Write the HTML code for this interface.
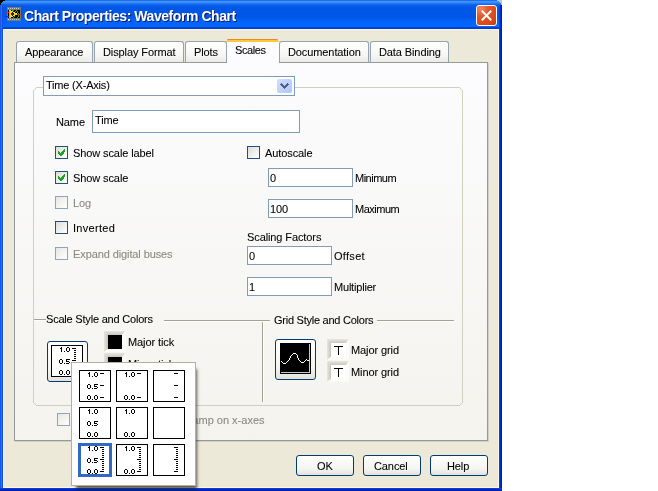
<!DOCTYPE html>
<html><head><meta charset="utf-8">
<style>
*{margin:0;padding:0;box-sizing:border-box}
html,body{width:658px;height:491px;overflow:hidden;background:#fff}
body{position:relative;font-family:"Liberation Sans",sans-serif;font-size:11px;color:#000}
.a{position:absolute}
.t{will-change:transform;position:absolute;white-space:nowrap;font-size:11px;line-height:13px;letter-spacing:-0.1px;-webkit-text-stroke:0.08px currentColor}
#win{left:0;top:0;width:502px;height:491px;background:#ECE9D8}
#title{left:0;top:0;width:502px;height:29px;background:linear-gradient(#0A3FD0 0px,#3D95FF 1px,#3D95FF 2px,#0C5EEA 5px,#0056E5 8px,#0057E7 18px,#0064FC 21px,#0067FF 26.5px,#0046D8 27px,#003CD2 29px)}
#lb{left:0;top:5px;width:3px;height:486px;background:linear-gradient(90deg,#0846E0,#2A6EF2 1px,#2A6EF2 2px,#0D50E8 2px)}
#rb{left:499px;top:5px;width:3px;height:486px;background:linear-gradient(90deg,#0A3CDE 0,#0A3CDE 1px,#002ECA 1px,#002ECA 2px,#001CA8 2px)}
#bb{left:0;top:488px;width:502px;height:3px;background:linear-gradient(#0A3CDE 0,#0A3CDE 1px,#002ECA 1px,#002ECA 2px,#001CA8 2px)}
.tab{position:absolute;top:41px;height:21px;border:1px solid #95A3AC;border-bottom:none;border-radius:3px 3px 0 0;background:linear-gradient(#FFFFFF,#F7F7F5 60%,#ECEBE6)}
.tabt{will-change:transform;position:absolute;top:46px;white-space:nowrap;font-size:11px;line-height:13px;letter-spacing:-0.1px;-webkit-text-stroke:0.08px currentColor}
#panel{left:14px;top:62px;width:474px;height:379px;border:1px solid #919B9C;background:linear-gradient(#FCFCFE,#F4F3EE);box-shadow:1px 1px 0 #D0D0C8}
.tb{position:absolute;border:1px solid #7F9DB9;background:#fff}
.cb{position:absolute;width:13px;height:13px;border:1px solid #1C5180;background:linear-gradient(135deg,#DCDCD7,#FFFFFF)}
.cbd{border-color:#8AA5C4;background:linear-gradient(135deg,#E6E6E0,#FFFFFF)}
.dis{color:#8A887E}
.btn{position:absolute;border:1px solid #003C74;border-radius:3px;background:linear-gradient(#FFFFFF,#F4F4F0 70%,#E3E2DA)}
</style></head><body>
<div id="win" class="a"></div>
<div id="title" class="a"></div>
<svg class="a" style="left:0;top:0" width="502" height="5" shape-rendering="crispEdges"><path fill="#000" d="M0 0h5v1h-5zM0 1h3v1h-3zM0 2h2v1h-2zM0 3h1v2h-1z"/><path fill="#C4C2BA" d="M497 0h5v1h-5zM499 1h3v1h-3zM500 2h2v1h-2zM501 3h1v2h-1z"/></svg>
<div id="lb" class="a"></div>
<div id="rb" class="a"></div>
<div id="bb" class="a"></div>
<div class="a" style="left:3px;top:29px;width:496px;height:1px;background:#FFF8E4"></div>
<div class="a" style="left:3px;top:29px;width:1px;height:459px;background:#FFF8E4"></div>
<div class="a" style="left:498px;top:29px;width:1px;height:459px;background:#FFF8E4"></div>
<div class="a" style="left:3px;top:487px;width:496px;height:1px;background:#FFF8E4"></div>
<!-- icon -->
<svg class="a" style="left:5px;top:7px" width="17" height="14" shape-rendering="crispEdges"><rect x="2" y="0" width="14" height="14" fill="#7A7872"/><rect x="3" y="1" width="1" height="1" fill="#C8C8C4"/><rect x="3" y="12" width="1" height="1" fill="#C8C8C4"/><rect x="5" y="1" width="1" height="1" fill="#C8C8C4"/><rect x="5" y="12" width="1" height="1" fill="#C8C8C4"/><rect x="7" y="1" width="1" height="1" fill="#C8C8C4"/><rect x="7" y="12" width="1" height="1" fill="#C8C8C4"/><rect x="9" y="1" width="1" height="1" fill="#C8C8C4"/><rect x="9" y="12" width="1" height="1" fill="#C8C8C4"/><rect x="11" y="1" width="1" height="1" fill="#C8C8C4"/><rect x="11" y="12" width="1" height="1" fill="#C8C8C4"/><rect x="13" y="1" width="1" height="1" fill="#C8C8C4"/><rect x="13" y="12" width="1" height="1" fill="#C8C8C4"/><rect x="3" y="3" width="12" height="8" fill="#000"/><rect x="7" y="3" width="1" height="1" fill="#18B018"/><rect x="8" y="3" width="1" height="1" fill="#18B018"/><rect x="11" y="3" width="1" height="1" fill="#18B018"/><rect x="10" y="4" width="1" height="1" fill="#18B018"/><rect x="12" y="4" width="1" height="1" fill="#18B018"/><rect x="12" y="5" width="1" height="1" fill="#18B018"/><rect x="13" y="6" width="1" height="1" fill="#18B018"/><rect x="13" y="8" width="1" height="1" fill="#18B018"/><rect x="9" y="9" width="1" height="1" fill="#18B018"/><rect x="13" y="9" width="1" height="1" fill="#18B018"/><rect x="8" y="10" width="1" height="1" fill="#18B018"/><rect x="12" y="10" width="1" height="1" fill="#18B018"/><rect x="4" y="3" width="2" height="1" fill="#F8D81C"/><rect x="4" y="4" width="4" height="1" fill="#F8D81C"/><rect x="4" y="5" width="6" height="1" fill="#F8D81C"/><rect x="4" y="6" width="8" height="1" fill="#F8D81C"/><rect x="4" y="7" width="8" height="1" fill="#F8D81C"/><rect x="4" y="8" width="6" height="1" fill="#F8D81C"/><rect x="4" y="9" width="4" height="1" fill="#F8D81C"/><rect x="4" y="10" width="2" height="1" fill="#F8D81C"/><rect x="4" y="4" width="1" height="6" fill="#E8B000"/><rect x="7" y="5" width="1" height="4" fill="#302800"/><rect x="6" y="6" width="3" height="2" fill="#302800"/><rect x="0" y="5" width="4" height="1" fill="#F01818"/><rect x="0" y="9" width="4" height="1" fill="#1028F0"/><rect x="12" y="7" width="4" height="1" fill="#F01818"/></svg>
<div class="a" style="left:25px;top:9px;will-change:transform;font-weight:bold;font-size:14px;letter-spacing:-0.44px;line-height:16px;color:#0A1E6E;white-space:nowrap">Chart Properties: Waveform Chart</div>
<div class="a" style="left:24px;top:8px;will-change:transform;font-weight:bold;font-size:14px;letter-spacing:-0.44px;line-height:16px;color:#fff;white-space:nowrap">Chart Properties: Waveform Chart</div>
<!-- close btn -->
<div class="a" style="left:476px;top:5px;width:21px;height:21px;border:1px solid #fff;border-radius:3px;background:radial-gradient(circle at 20% 15%,#F08868 0,#E4582A 35%,#D84818 75%,#C03A0E 100%)"></div>
<svg class="a" style="left:476px;top:5px" width="21" height="21" viewBox="0 0 21 21"><path d="M5.8 5.8 L15.2 15.2 M15.2 5.8 L5.8 15.2" stroke="#fff" stroke-width="2"/></svg>

<!-- tabs -->
<div id="panel" class="a"></div>
<div class="tab" style="left:16px;width:77px"></div><div class="tabt" style="left:25px">Appearance</div>
<div class="tab" style="left:94px;width:90px"></div><div class="tabt" style="left:103px">Display Format</div>
<div class="tab" style="left:185px;width:42px"></div><div class="tabt" style="left:194px">Plots</div>
<div class="tab" style="left:279px;width:90px"></div><div class="tabt" style="left:288px">Documentation</div>
<div class="tab" style="left:370px;width:79px"></div><div class="tabt" style="left:379px">Data Binding</div>
<div class="a" style="left:227px;top:41px;width:52px;height:22px;background:#FCFCFE"></div>
<svg class="a" style="left:226px;top:39px" width="53" height="3" shape-rendering="crispEdges"><path fill="#E68B2C" d="M2 0h49v1h-49z"/><path fill="#FFC73C" d="M1 1h51v1h-51zM0 2h53v1h-53z"/><path fill="#F2A84A" d="M1 0h1v1h-1zM51 0h1v1h-1z"/></svg>
<div class="tabt" style="left:235px;top:44px;letter-spacing:-0.4px">Scales</div>

<!-- group box -->
<svg class="a" style="left:0;top:0" width="502" height="491" shape-rendering="crispEdges"><path fill="#D0D0BF" d="M36 87h424v1h-424z M36 405h424v1h-424z M33 90h1v313h-1z M462 90h1v313h-1z M34 89h1v1h-1z M35 88h1v1h-1z M461 89h1v1h-1z M460 88h1v1h-1z M34 403h1v1h-1z M35 404h1v1h-1z M461 403h1v1h-1z M460 404h1v1h-1z"/></svg>
<div class="tb" style="left:43px;top:76px;width:252px;height:20px"></div>
<div class="t" style="left:46px;top:79px;letter-spacing:-0.2px">Time (X-Axis)</div>
<div class="a" style="left:277px;top:79px;width:15px;height:14px;border-radius:2px;background:linear-gradient(135deg,#D2DEFD,#BFD0FA 55%,#AFC6F8)"></div>
<svg class="a" style="left:277px;top:79px" width="15" height="14" shape-rendering="crispEdges"><path d="M4 4h1v1h-1zM10 4h1v1h-1zM3 5h1v1h-1zM4 5h1v1h-1zM5 5h1v1h-1zM9 5h1v1h-1zM10 5h1v1h-1zM11 5h1v1h-1zM4 6h1v1h-1zM5 6h1v1h-1zM6 6h1v1h-1zM8 6h1v1h-1zM9 6h1v1h-1zM10 6h1v1h-1zM5 7h1v1h-1zM6 7h1v1h-1zM7 7h1v1h-1zM8 7h1v1h-1zM9 7h1v1h-1zM6 8h1v1h-1zM7 8h1v1h-1zM8 8h1v1h-1zM7 9h1v1h-1z" fill="#4D6185"/></svg>

<div class="t" style="left:56px;top:116px">Name</div>
<div class="tb" style="left:92px;top:110px;width:208px;height:23px"></div>
<div class="t" style="left:95px;top:114px">Time</div>

<div class="cb" style="left:55px;top:146px"></div>
<div class="t" style="left:73px;top:147px">Show scale label</div>
<div class="cb" style="left:55px;top:171px"></div>
<div class="t" style="left:73px;top:172px">Show scale</div>
<div class="cb cbd" style="left:55px;top:196px"></div>
<div class="t dis" style="left:73px;top:197px">Log</div>
<div class="cb" style="left:55px;top:221px"></div>
<div class="t" style="left:73px;top:222px;letter-spacing:0.3px">Inverted</div>
<div class="cb cbd" style="left:55px;top:247px"></div>
<div class="t dis" style="left:73px;top:248px">Expand digital buses</div>
<svg class="a" style="left:58px;top:149px" width="7" height="7" shape-rendering="crispEdges"><path fill="#21A121" d="M6 0h1v3h-1zM5 1h1v4h-1zM4 2h1v4h-1zM3 3h1v4h-1zM2 4h1v3h-1zM1 3h1v3h-1zM0 2h1v3h-1z"/></svg>
<svg class="a" style="left:58px;top:174px" width="7" height="7" shape-rendering="crispEdges"><path fill="#21A121" d="M6 0h1v3h-1zM5 1h1v4h-1zM4 2h1v4h-1zM3 3h1v4h-1zM2 4h1v3h-1zM1 3h1v3h-1zM0 2h1v3h-1z"/></svg>

<div class="cb" style="left:247px;top:146px"></div>
<div class="t" style="left:265px;top:147px">Autoscale</div>
<div class="tb" style="left:268px;top:168px;width:85px;height:19px"></div>
<div class="t" style="left:270px;top:172px">0</div>
<div class="t" style="left:355px;top:172px;letter-spacing:-0.5px">Minimum</div>
<div class="tb" style="left:268px;top:199px;width:85px;height:19px"></div>
<div class="t" style="left:270px;top:203px">100</div>
<div class="t" style="left:355px;top:203px;letter-spacing:-0.5px">Maximum</div>
<div class="t" style="left:247px;top:231px">Scaling Factors</div>
<div class="tb" style="left:247px;top:246px;width:85px;height:19px"></div>
<div class="t" style="left:249px;top:250px">0</div>
<div class="t" style="left:334px;top:250px;letter-spacing:0.3px">Offset</div>
<div class="tb" style="left:247px;top:277px;width:85px;height:19px"></div>
<div class="t" style="left:249px;top:281px">1</div>
<div class="t" style="left:334px;top:281px;letter-spacing:-0.2px">Multiplier</div>

<!-- scale style -->
<div class="a" style="left:34px;top:319px;width:12px;height:1px;background:#A5A28F;box-shadow:0 1px 0 #fff"></div>
<div class="t" style="left:46px;top:313px;letter-spacing:-0.2px">Scale Style and Colors</div>
<div class="a" style="left:164px;top:320px;width:106px;height:1px;background:#A5A28F;box-shadow:0 1px 0 #fff"></div>
<div class="t" style="left:274px;top:314px;letter-spacing:-0.25px">Grid Style and Colors</div>
<div class="a" style="left:377px;top:320px;width:77px;height:1px;background:#A5A28F;box-shadow:0 1px 0 #fff"></div>
<div class="a" style="left:262px;top:322px;width:1px;height:80px;background:#A5A28F;box-shadow:1px 0 0 #fff"></div>

<div class="btn" style="left:47px;top:341px;width:41px;height:41px"></div>
<svg class="a" style="left:51px;top:345px" width="32" height="32" shape-rendering="crispEdges"><rect x="0.5" y="0.5" width="31" height="31" fill="#fff" stroke="#000"/><path d="M10 2h1v1h-1zM9 3h1v1h-1zM10 3h1v1h-1zM10 4h1v1h-1zM10 5h1v1h-1zM10 6h1v1h-1zM13 6h1v1h-1zM16 2h1v1h-1zM17 2h1v1h-1zM15 3h1v1h-1zM18 3h1v1h-1zM15 4h1v1h-1zM18 4h1v1h-1zM15 5h1v1h-1zM18 5h1v1h-1zM16 6h1v1h-1zM17 6h1v1h-1zM9 14h1v1h-1zM10 14h1v1h-1zM8 15h1v1h-1zM11 15h1v1h-1zM8 16h1v1h-1zM11 16h1v1h-1zM8 17h1v1h-1zM11 17h1v1h-1zM9 18h1v1h-1zM10 18h1v1h-1zM13 18h1v1h-1zM15 14h1v1h-1zM16 14h1v1h-1zM17 14h1v1h-1zM18 14h1v1h-1zM15 15h1v1h-1zM15 16h1v1h-1zM16 16h1v1h-1zM17 16h1v1h-1zM18 17h1v1h-1zM15 18h1v1h-1zM16 18h1v1h-1zM17 18h1v1h-1zM9 25h1v1h-1zM10 25h1v1h-1zM8 26h1v1h-1zM11 26h1v1h-1zM8 27h1v1h-1zM11 27h1v1h-1zM8 28h1v1h-1zM11 28h1v1h-1zM9 29h1v1h-1zM10 29h1v1h-1zM13 29h1v1h-1zM16 25h1v1h-1zM17 25h1v1h-1zM15 26h1v1h-1zM18 26h1v1h-1zM15 27h1v1h-1zM18 27h1v1h-1zM15 28h1v1h-1zM18 28h1v1h-1zM16 29h1v1h-1zM17 29h1v1h-1zM21 3h4v1h-4zM21 15h4v1h-4zM21 27h4v1h-4zM23 5h2v1h-2zM23 7h2v1h-2zM23 9h2v1h-2zM23 11h2v1h-2zM23 13h2v1h-2zM23 17h2v1h-2zM23 19h2v1h-2zM23 21h2v1h-2zM23 23h2v1h-2zM23 25h2v1h-2z"/></svg>

<svg class="a" style="left:104px;top:331px" width="22" height="21"><defs><linearGradient id="bv331t" x1="0" y1="0" x2="0" y2="1"><stop offset="0" stop-color="#E8E6DE"/><stop offset="1" stop-color="#C9C7BD"/></linearGradient><linearGradient id="bv331l" x1="0" y1="0" x2="1" y2="0"><stop offset="0" stop-color="#E8E6DE"/><stop offset="1" stop-color="#C6C4BA"/></linearGradient></defs><polygon points="0,0 22,0 18,4 4,4" fill="url(#bv331t)"/><polygon points="0,0 4,4 4,18 0,21" fill="url(#bv331l)"/><polygon points="22,0 22,21 18,18 18,4" fill="#FBFBF7"/><polygon points="0,21 22,21 18,18 4,18" fill="#FBFBF7"/><rect x="4" y="4" width="14" height="14" fill="#000"/></svg>
<div class="t" style="left:128px;top:336px">Major tick</div>
<svg class="a" style="left:104px;top:353px" width="22" height="21"><defs><linearGradient id="bv353t" x1="0" y1="0" x2="0" y2="1"><stop offset="0" stop-color="#E8E6DE"/><stop offset="1" stop-color="#C9C7BD"/></linearGradient><linearGradient id="bv353l" x1="0" y1="0" x2="1" y2="0"><stop offset="0" stop-color="#E8E6DE"/><stop offset="1" stop-color="#C6C4BA"/></linearGradient></defs><polygon points="0,0 22,0 18,4 4,4" fill="url(#bv353t)"/><polygon points="0,0 4,4 4,18 0,21" fill="url(#bv353l)"/><polygon points="22,0 22,21 18,18 18,4" fill="#FBFBF7"/><polygon points="0,21 22,21 18,18 4,18" fill="#FBFBF7"/><rect x="4" y="4" width="14" height="14" fill="#000"/></svg>
<div class="t" style="left:128px;top:358px">Minor tick</div>

<div class="btn" style="left:275px;top:339px;width:41px;height:41px"></div>
<svg class="a" style="left:280px;top:343px" width="31" height="31" shape-rendering="crispEdges">
<rect width="31" height="31" fill="#000"/><rect x="29" y="1" width="1" height="29" fill="#C8C8C8"/><rect x="1" y="29" width="29" height="1" fill="#C8C8C8"/>
<path d="M1 18h1v1h-1zM2 19h1v1h-1zM3 20h1v1h-1zM4 20h1v1h-1zM5 20h1v1h-1zM6 19h1v1h-1zM7 18h1v1h-1zM8 17h1v1h-1zM9 16h1v1h-1zM9 15h1v1h-1zM10 14h1v1h-1zM10 13h1v1h-1zM11 12h1v1h-1zM12 11h1v1h-1zM13 10h1v1h-1zM14 10h1v1h-1zM15 10h1v1h-1zM16 11h1v1h-1zM17 12h1v1h-1zM17 13h1v1h-1zM17 14h1v1h-1zM18 15h1v1h-1zM18 16h1v1h-1zM19 17h1v1h-1zM20 18h1v1h-1zM21 19h1v1h-1zM22 19h1v1h-1zM23 19h1v1h-1zM24 18h1v1h-1zM25 17h1v1h-1zM26 16h1v1h-1zM27 17h1v1h-1zM28 17h1v1h-1z" fill="#fff"/>
</svg>
<svg class="a" style="left:327px;top:339px" width="22" height="21"><defs><linearGradient id="bv339t" x1="0" y1="0" x2="0" y2="1"><stop offset="0" stop-color="#E8E6DE"/><stop offset="1" stop-color="#C9C7BD"/></linearGradient><linearGradient id="bv339l" x1="0" y1="0" x2="1" y2="0"><stop offset="0" stop-color="#E8E6DE"/><stop offset="1" stop-color="#C6C4BA"/></linearGradient></defs><polygon points="0,0 22,0 19,4 4,4" fill="url(#bv339t)"/><polygon points="0,0 4,4 4,18 0,21" fill="url(#bv339l)"/><polygon points="22,0 22,21 19,18 19,4" fill="#FBFBF7"/><polygon points="0,21 22,21 19,18 4,18" fill="#FBFBF7"/><rect x="4" y="4" width="15" height="14" fill="#fff"/></svg>
<svg class="a" style="left:334px;top:346px" width="9" height="9" shape-rendering="crispEdges"><rect width="9" height="1"/><rect x="4" width="1" height="9"/></svg>
<div class="t" style="left:351px;top:344px">Major grid</div>
<svg class="a" style="left:327px;top:361px" width="22" height="21"><defs><linearGradient id="bv361t" x1="0" y1="0" x2="0" y2="1"><stop offset="0" stop-color="#E8E6DE"/><stop offset="1" stop-color="#C9C7BD"/></linearGradient><linearGradient id="bv361l" x1="0" y1="0" x2="1" y2="0"><stop offset="0" stop-color="#E8E6DE"/><stop offset="1" stop-color="#C6C4BA"/></linearGradient></defs><polygon points="0,0 22,0 19,4 4,4" fill="url(#bv361t)"/><polygon points="0,0 4,4 4,18 0,21" fill="url(#bv361l)"/><polygon points="22,0 22,21 19,18 19,4" fill="#FBFBF7"/><polygon points="0,21 22,21 19,18 4,18" fill="#FBFBF7"/><rect x="4" y="4" width="15" height="14" fill="#fff"/></svg>
<svg class="a" style="left:334px;top:368px" width="9" height="9" shape-rendering="crispEdges"><rect width="9" height="1"/><rect x="4" width="1" height="9"/></svg>
<div class="t" style="left:351px;top:366px">Minor grid</div>

<div class="cb cbd" style="left:57px;top:413px"></div>
<div class="t dis" style="left:75px;top:414px;letter-spacing:0">Ignore waveform time stamp on x-axes</div>

<!-- buttons -->
<div class="btn" style="left:296px;top:455px;width:58px;height:21px"></div>
<div class="t" style="left:317px;top:460px">OK</div>
<div class="btn" style="left:363px;top:455px;width:58px;height:21px"></div>
<div class="t" style="left:374px;top:460px">Cancel</div>
<div class="btn" style="left:430px;top:455px;width:58px;height:21px"></div>
<div class="t" style="left:447px;top:460px">Help</div>

<!-- popup -->
<div class="a" style="left:71px;top:362px;width:125px;height:124px;background:#fff;border:1px solid #B4B09C;box-shadow:3px 5px 3px -2px rgba(30,28,20,0.7)"></div>
<svg class="a" style="left:79px;top:370px" width="32" height="32" shape-rendering="crispEdges"><rect x="0.5" y="0.5" width="31" height="31" fill="#fff" stroke="#000"/><path d="M10 2h1v1h-1zM9 3h1v1h-1zM10 3h1v1h-1zM10 4h1v1h-1zM10 5h1v1h-1zM10 6h1v1h-1zM13 6h1v1h-1zM16 2h1v1h-1zM17 2h1v1h-1zM15 3h1v1h-1zM18 3h1v1h-1zM15 4h1v1h-1zM18 4h1v1h-1zM15 5h1v1h-1zM18 5h1v1h-1zM16 6h1v1h-1zM17 6h1v1h-1zM9 14h1v1h-1zM10 14h1v1h-1zM8 15h1v1h-1zM11 15h1v1h-1zM8 16h1v1h-1zM11 16h1v1h-1zM8 17h1v1h-1zM11 17h1v1h-1zM9 18h1v1h-1zM10 18h1v1h-1zM13 18h1v1h-1zM15 14h1v1h-1zM16 14h1v1h-1zM17 14h1v1h-1zM18 14h1v1h-1zM15 15h1v1h-1zM15 16h1v1h-1zM16 16h1v1h-1zM17 16h1v1h-1zM18 17h1v1h-1zM15 18h1v1h-1zM16 18h1v1h-1zM17 18h1v1h-1zM9 25h1v1h-1zM10 25h1v1h-1zM8 26h1v1h-1zM11 26h1v1h-1zM8 27h1v1h-1zM11 27h1v1h-1zM8 28h1v1h-1zM11 28h1v1h-1zM9 29h1v1h-1zM10 29h1v1h-1zM13 29h1v1h-1zM16 25h1v1h-1zM17 25h1v1h-1zM15 26h1v1h-1zM18 26h1v1h-1zM15 27h1v1h-1zM18 27h1v1h-1zM15 28h1v1h-1zM18 28h1v1h-1zM16 29h1v1h-1zM17 29h1v1h-1zM21 3h4v1h-4zM21 15h4v1h-4zM21 27h4v1h-4z"/></svg>
<svg class="a" style="left:116px;top:370px" width="32" height="32" shape-rendering="crispEdges"><rect x="0.5" y="0.5" width="31" height="31" fill="#fff" stroke="#000"/><path d="M10 2h1v1h-1zM9 3h1v1h-1zM10 3h1v1h-1zM10 4h1v1h-1zM10 5h1v1h-1zM10 6h1v1h-1zM13 6h1v1h-1zM16 2h1v1h-1zM17 2h1v1h-1zM15 3h1v1h-1zM18 3h1v1h-1zM15 4h1v1h-1zM18 4h1v1h-1zM15 5h1v1h-1zM18 5h1v1h-1zM16 6h1v1h-1zM17 6h1v1h-1zM9 25h1v1h-1zM10 25h1v1h-1zM8 26h1v1h-1zM11 26h1v1h-1zM8 27h1v1h-1zM11 27h1v1h-1zM8 28h1v1h-1zM11 28h1v1h-1zM9 29h1v1h-1zM10 29h1v1h-1zM13 29h1v1h-1zM16 25h1v1h-1zM17 25h1v1h-1zM15 26h1v1h-1zM18 26h1v1h-1zM15 27h1v1h-1zM18 27h1v1h-1zM15 28h1v1h-1zM18 28h1v1h-1zM16 29h1v1h-1zM17 29h1v1h-1zM21 3h4v1h-4zM21 27h4v1h-4z"/></svg>
<svg class="a" style="left:153px;top:370px" width="32" height="32" shape-rendering="crispEdges"><rect x="0.5" y="0.5" width="31" height="31" fill="#fff" stroke="#000"/><path d="M21 3h4v1h-4zM21 15h4v1h-4zM21 27h4v1h-4z"/></svg>
<svg class="a" style="left:79px;top:407px" width="32" height="32" shape-rendering="crispEdges"><rect x="0.5" y="0.5" width="31" height="31" fill="#fff" stroke="#000"/><path d="M10 2h1v1h-1zM9 3h1v1h-1zM10 3h1v1h-1zM10 4h1v1h-1zM10 5h1v1h-1zM10 6h1v1h-1zM13 6h1v1h-1zM16 2h1v1h-1zM17 2h1v1h-1zM15 3h1v1h-1zM18 3h1v1h-1zM15 4h1v1h-1zM18 4h1v1h-1zM15 5h1v1h-1zM18 5h1v1h-1zM16 6h1v1h-1zM17 6h1v1h-1zM9 14h1v1h-1zM10 14h1v1h-1zM8 15h1v1h-1zM11 15h1v1h-1zM8 16h1v1h-1zM11 16h1v1h-1zM8 17h1v1h-1zM11 17h1v1h-1zM9 18h1v1h-1zM10 18h1v1h-1zM13 18h1v1h-1zM15 14h1v1h-1zM16 14h1v1h-1zM17 14h1v1h-1zM18 14h1v1h-1zM15 15h1v1h-1zM15 16h1v1h-1zM16 16h1v1h-1zM17 16h1v1h-1zM18 17h1v1h-1zM15 18h1v1h-1zM16 18h1v1h-1zM17 18h1v1h-1zM9 25h1v1h-1zM10 25h1v1h-1zM8 26h1v1h-1zM11 26h1v1h-1zM8 27h1v1h-1zM11 27h1v1h-1zM8 28h1v1h-1zM11 28h1v1h-1zM9 29h1v1h-1zM10 29h1v1h-1zM13 29h1v1h-1zM16 25h1v1h-1zM17 25h1v1h-1zM15 26h1v1h-1zM18 26h1v1h-1zM15 27h1v1h-1zM18 27h1v1h-1zM15 28h1v1h-1zM18 28h1v1h-1zM16 29h1v1h-1zM17 29h1v1h-1z"/></svg>
<svg class="a" style="left:116px;top:407px" width="32" height="32" shape-rendering="crispEdges"><rect x="0.5" y="0.5" width="31" height="31" fill="#fff" stroke="#000"/><path d="M10 2h1v1h-1zM9 3h1v1h-1zM10 3h1v1h-1zM10 4h1v1h-1zM10 5h1v1h-1zM10 6h1v1h-1zM13 6h1v1h-1zM16 2h1v1h-1zM17 2h1v1h-1zM15 3h1v1h-1zM18 3h1v1h-1zM15 4h1v1h-1zM18 4h1v1h-1zM15 5h1v1h-1zM18 5h1v1h-1zM16 6h1v1h-1zM17 6h1v1h-1zM9 25h1v1h-1zM10 25h1v1h-1zM8 26h1v1h-1zM11 26h1v1h-1zM8 27h1v1h-1zM11 27h1v1h-1zM8 28h1v1h-1zM11 28h1v1h-1zM9 29h1v1h-1zM10 29h1v1h-1zM13 29h1v1h-1zM16 25h1v1h-1zM17 25h1v1h-1zM15 26h1v1h-1zM18 26h1v1h-1zM15 27h1v1h-1zM18 27h1v1h-1zM15 28h1v1h-1zM18 28h1v1h-1zM16 29h1v1h-1zM17 29h1v1h-1z"/></svg>
<svg class="a" style="left:153px;top:407px" width="32" height="32" shape-rendering="crispEdges"><rect x="0.5" y="0.5" width="31" height="31" fill="#fff" stroke="#000"/><path d=""/></svg>
<svg class="a" style="left:79px;top:444px" width="32" height="32" shape-rendering="crispEdges"><rect x="0.5" y="0.5" width="31" height="31" fill="#fff" stroke="#000"/><path d="M10 2h1v1h-1zM9 3h1v1h-1zM10 3h1v1h-1zM10 4h1v1h-1zM10 5h1v1h-1zM10 6h1v1h-1zM13 6h1v1h-1zM16 2h1v1h-1zM17 2h1v1h-1zM15 3h1v1h-1zM18 3h1v1h-1zM15 4h1v1h-1zM18 4h1v1h-1zM15 5h1v1h-1zM18 5h1v1h-1zM16 6h1v1h-1zM17 6h1v1h-1zM9 14h1v1h-1zM10 14h1v1h-1zM8 15h1v1h-1zM11 15h1v1h-1zM8 16h1v1h-1zM11 16h1v1h-1zM8 17h1v1h-1zM11 17h1v1h-1zM9 18h1v1h-1zM10 18h1v1h-1zM13 18h1v1h-1zM15 14h1v1h-1zM16 14h1v1h-1zM17 14h1v1h-1zM18 14h1v1h-1zM15 15h1v1h-1zM15 16h1v1h-1zM16 16h1v1h-1zM17 16h1v1h-1zM18 17h1v1h-1zM15 18h1v1h-1zM16 18h1v1h-1zM17 18h1v1h-1zM9 25h1v1h-1zM10 25h1v1h-1zM8 26h1v1h-1zM11 26h1v1h-1zM8 27h1v1h-1zM11 27h1v1h-1zM8 28h1v1h-1zM11 28h1v1h-1zM9 29h1v1h-1zM10 29h1v1h-1zM13 29h1v1h-1zM16 25h1v1h-1zM17 25h1v1h-1zM15 26h1v1h-1zM18 26h1v1h-1zM15 27h1v1h-1zM18 27h1v1h-1zM15 28h1v1h-1zM18 28h1v1h-1zM16 29h1v1h-1zM17 29h1v1h-1zM21 3h4v1h-4zM21 15h4v1h-4zM21 27h4v1h-4zM23 5h2v1h-2zM23 7h2v1h-2zM23 9h2v1h-2zM23 11h2v1h-2zM23 13h2v1h-2zM23 17h2v1h-2zM23 19h2v1h-2zM23 21h2v1h-2zM23 23h2v1h-2zM23 25h2v1h-2z"/></svg>
<svg class="a" style="left:116px;top:444px" width="32" height="32" shape-rendering="crispEdges"><rect x="0.5" y="0.5" width="31" height="31" fill="#fff" stroke="#000"/><path d="M10 2h1v1h-1zM9 3h1v1h-1zM10 3h1v1h-1zM10 4h1v1h-1zM10 5h1v1h-1zM10 6h1v1h-1zM13 6h1v1h-1zM16 2h1v1h-1zM17 2h1v1h-1zM15 3h1v1h-1zM18 3h1v1h-1zM15 4h1v1h-1zM18 4h1v1h-1zM15 5h1v1h-1zM18 5h1v1h-1zM16 6h1v1h-1zM17 6h1v1h-1zM9 25h1v1h-1zM10 25h1v1h-1zM8 26h1v1h-1zM11 26h1v1h-1zM8 27h1v1h-1zM11 27h1v1h-1zM8 28h1v1h-1zM11 28h1v1h-1zM9 29h1v1h-1zM10 29h1v1h-1zM13 29h1v1h-1zM16 25h1v1h-1zM17 25h1v1h-1zM15 26h1v1h-1zM18 26h1v1h-1zM15 27h1v1h-1zM18 27h1v1h-1zM15 28h1v1h-1zM18 28h1v1h-1zM16 29h1v1h-1zM17 29h1v1h-1zM21 3h4v1h-4zM21 15h4v1h-4zM21 27h4v1h-4zM23 5h2v1h-2zM23 7h2v1h-2zM23 9h2v1h-2zM23 11h2v1h-2zM23 13h2v1h-2zM23 17h2v1h-2zM23 19h2v1h-2zM23 21h2v1h-2zM23 23h2v1h-2zM23 25h2v1h-2z"/></svg>
<svg class="a" style="left:153px;top:444px" width="32" height="32" shape-rendering="crispEdges"><rect x="0.5" y="0.5" width="31" height="31" fill="#fff" stroke="#000"/><path d="M21 3h4v1h-4zM21 15h4v1h-4zM21 27h4v1h-4zM23 5h2v1h-2zM23 7h2v1h-2zM23 9h2v1h-2zM23 11h2v1h-2zM23 13h2v1h-2zM23 17h2v1h-2zM23 19h2v1h-2zM23 21h2v1h-2zM23 23h2v1h-2zM23 25h2v1h-2z"/></svg>
<div class="a" style="left:78px;top:443px;width:34px;height:34px;border:3px solid #316AC5"></div>
</body></html>
